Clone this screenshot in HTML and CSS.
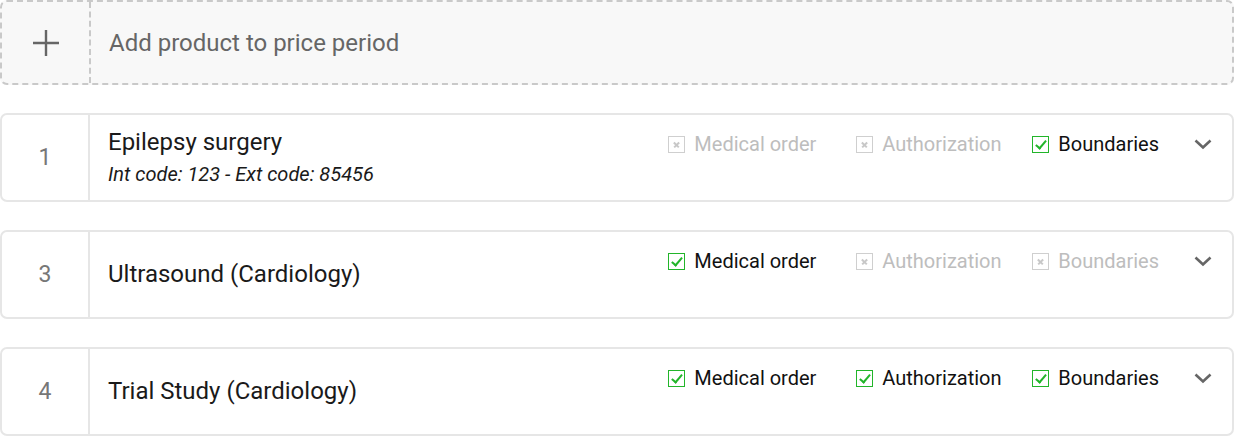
FILE: index.html
```html
<!DOCTYPE html>
<html lang="en">
<head>
    <meta charset="UTF-8">
    <meta name="viewport" content="width=device-width, initial-scale=1.0">
    <title>Price period products</title>
    <link rel="stylesheet" href="styles.css">
</head>
<body>
    <div class="list">
        <!-- add new product -->
        <div class="add-box">
            <div class="add-icon">
                <svg width="28" height="28" viewBox="0 0 28 28"><path d="M14 1v26M1 14h26" stroke="#666" stroke-width="2.4" fill="none"/></svg>
            </div>
            <div class="add-text">Add product to price period</div>
        </div>

        <div class="row">
            <div class="num">1</div>
            <div class="info">
                <div class="title">Epilepsy surgery</div>
                <div class="sub">Int code: 123 - Ext code: 85456</div>
            </div>
            <div class="checks">
                <span class="check med off"><i class="box"></i>Medical order</span>
                <span class="check auth off"><i class="box"></i>Authorization</span>
                <span class="check bound on"><i class="box"></i>Boundaries</span>
                <span class="chev"><svg width="18" height="12" viewBox="0 0 18 12"><path d="M1.5 2.5L9 9.5l7.5-7" stroke="#666" stroke-width="2.6" fill="none"/></svg></span>
            </div>
        </div>

        <div class="row">
            <div class="num">3</div>
            <div class="info">
                <div class="title">Ultrasound (Cardiology)</div>
            </div>
            <div class="checks">
                <span class="check med on"><i class="box"></i>Medical order</span>
                <span class="check auth off"><i class="box"></i>Authorization</span>
                <span class="check bound off"><i class="box"></i>Boundaries</span>
                <span class="chev"><svg width="18" height="12" viewBox="0 0 18 12"><path d="M1.5 2.5L9 9.5l7.5-7" stroke="#666" stroke-width="2.6" fill="none"/></svg></span>
            </div>
        </div>

        <div class="row">
            <div class="num">4</div>
            <div class="info">
                <div class="title">Trial Study (Cardiology)</div>
            </div>
            <div class="checks">
                <span class="check med on"><i class="box"></i>Medical order</span>
                <span class="check auth on"><i class="box"></i>Authorization</span>
                <span class="check bound on"><i class="box"></i>Boundaries</span>
                <span class="chev"><svg width="18" height="12" viewBox="0 0 18 12"><path d="M1.5 2.5L9 9.5l7.5-7" stroke="#666" stroke-width="2.6" fill="none"/></svg></span>
            </div>
        </div>
    </div>
</body>
</html>
```

FILE: styles.css
```css
body {
    margin: 0;
    font-family: Roboto, "Liberation Sans", sans-serif;
    background: #fff;
}

.list {
    width: 1234px;
    display: flex;
    flex-direction: column;
    gap: 28px;
}

.add-box {
    height: 85px;
    box-sizing: border-box;
    border: 2px dashed #c9c9c9;
    border-radius: 7px;
    background: #f8f8f8;
    display: flex;
    align-items: stretch;
}

.add-icon {
    width: 87px;
    border-right: 2px dashed #c9c9c9;
    display: flex;
    justify-content: center;
    align-items: center;
}

.add-text {
    display: flex;
    align-items: center;
    padding-left: 18px;
    font-size: 24px;
    color: #666;
}

.row {
    height: 89px;
    box-sizing: border-box;
    border: 2px solid #e6e6e6;
    border-radius: 7px;
    display: flex;
}

.num {
    width: 86px;
    flex-shrink: 0;
    border-right: 2px solid #e6e6e6;
    display: flex;
    justify-content: center;
    align-items: center;
    font-size: 23px;
    color: #777;
}

.info {
    flex: 1;
    min-width: 0;
    padding-left: 18px;
    padding-bottom: 2px;
    display: flex;
    flex-direction: column;
    justify-content: center;
}

.title {
    font-size: 24px;
    line-height: 30px;
    color: #1a1a1a;
}

.sub {
    font-size: 20px;
    font-style: italic;
    line-height: 26px;
    margin-top: 4px;
    color: #1a1a1a;
}

.checks {
    display: flex;
    flex-shrink: 0;
    align-items: center;
    align-self: flex-start;
    padding-top: 16px;
    padding-right: 20px;
    white-space: nowrap;
}

.check {
    display: flex;
    align-items: center;
    font-size: 20px;
    line-height: 26px;
}

.check.med {
    width: 148px;
}

.check.auth {
    width: 144px;
    margin-left: 40px;
}

.check.bound {
    margin-left: 32px;
}

.check.off {
    color: #bdbdbd;
}

.check.on {
    color: #111;
}

.box {
    width: 17px;
    height: 17px;
    box-sizing: border-box;
    margin-right: 9px;
    position: relative;
    flex-shrink: 0;
}

.off .box {
    border: 1px solid #cfcfcf;
}

.off .box::before,
.off .box::after {
    content: "";
    position: absolute;
    left: 4px;
    top: 7px;
    width: 7px;
    height: 1.5px;
    background: #c8c8c8;
    transform: rotate(45deg);
}

.off .box::after {
    transform: rotate(-45deg);
}

.on .box {
    border: 1.5px solid #22b52a;
}

.on .box::after {
    content: "";
    position: absolute;
    left: 5px;
    top: 1px;
    width: 4px;
    height: 9px;
    border: solid #22b52a;
    border-width: 0 2.5px 2.5px 0;
    transform: rotate(40deg);
}

.chev {
    margin-left: 35px;
    display: flex;
    align-items: center;
}
```
